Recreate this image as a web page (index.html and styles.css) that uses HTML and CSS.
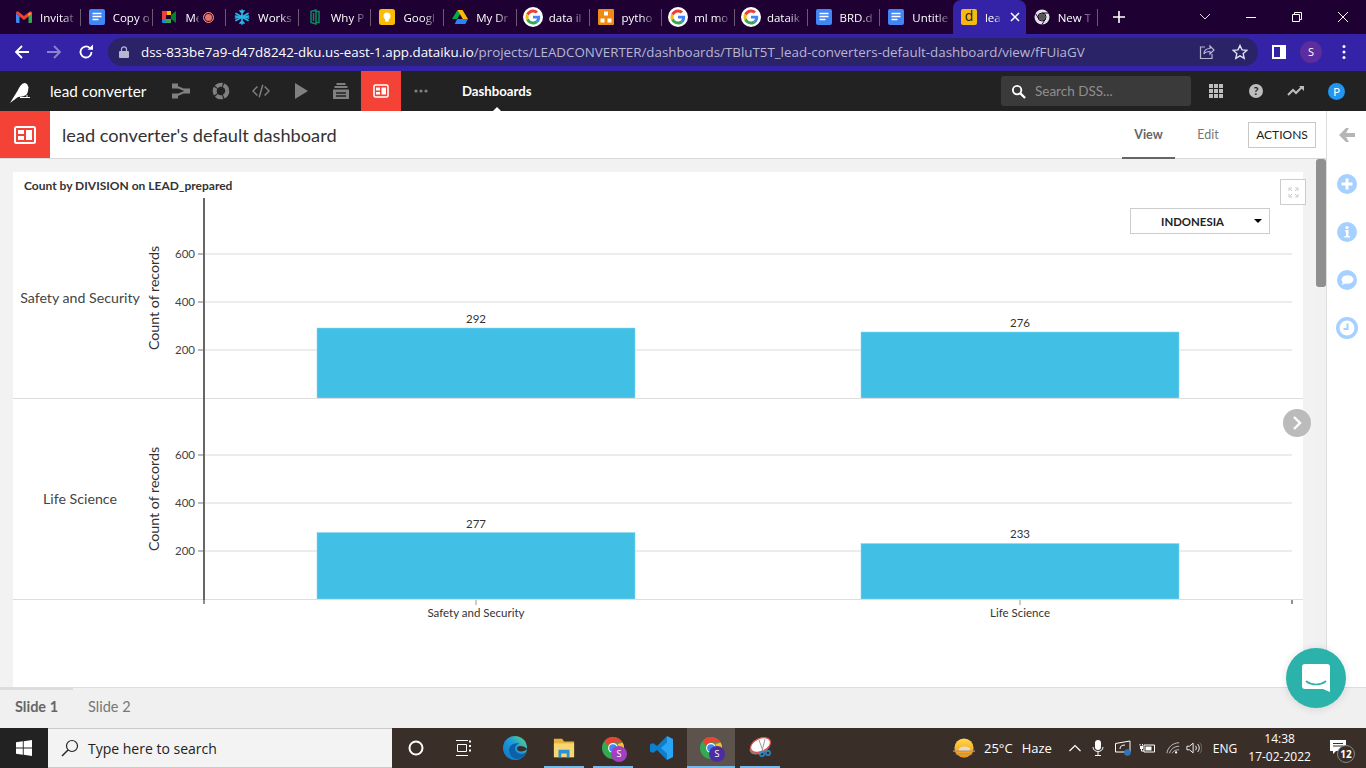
FILE: index.html
```html
<!DOCTYPE html>
<html lang="en">
<head>
    <meta charset="UTF-8">
    <title>lead converter's default dashboard</title>
    <link rel="stylesheet" href="styles.css">
</head>
<body>
    <svg class="defs" width="0" height="0">
        <symbol id="i-doc" viewBox="0 0 16 16"><rect width="16" height="16" rx="2" fill="#4285f4"/><path d="M3.5 4.5h9M3.5 7.5h9M3.5 10.5h6" stroke="#fff" stroke-width="1.5"/></symbol>
        <symbol id="i-g" viewBox="-8 -8 64 64"><circle cx="24" cy="24" r="32" fill="#fff"/><path fill="#EA4335" d="M24 9.5c3.54 0 6.71 1.22 9.21 3.6l6.85-6.85C35.9 2.38 30.47 0 24 0 14.62 0 6.51 5.38 2.56 13.22l7.98 6.19C12.43 13.72 17.74 9.5 24 9.5z"/><path fill="#4285F4" d="M46.98 24.55c0-1.57-.15-3.09-.38-4.55H24v9.02h12.94c-.58 2.96-2.26 5.48-4.78 7.18l7.73 6c4.51-4.18 7.09-10.36 7.09-17.65z"/><path fill="#FBBC05" d="M10.53 28.59c-.48-1.45-.76-2.99-.76-4.59s.27-3.14.76-4.59l-7.98-6.19C.92 16.46 0 20.12 0 24c0 3.88.92 7.54 2.56 10.78l7.97-6.19z"/><path fill="#34A853" d="M24 48c6.48 0 11.93-2.13 15.89-5.81l-7.73-6c-2.15 1.45-4.92 2.3-8.16 2.3-6.26 0-11.57-4.22-13.47-9.91l-7.98 6.19C6.51 42.62 14.62 48 24 48z"/></symbol>
        <symbol id="i-chrome" viewBox="0 0 24 24"><circle cx="12" cy="12" r="12" fill="#34a853"/><path d="M12 0a12 12 0 0 1 10.4 6H12a6 6 0 0 0-5.6 3.8L2.6 4.6A12 12 0 0 1 12 0z" fill="#ea4335"/><path d="M22.4 6A12 12 0 0 1 12 24l4.8-8.6A6 6 0 0 0 17 8z" fill="#fbc02d"/><circle cx="12" cy="12" r="5.4" fill="#fff"/><circle cx="12" cy="12" r="4.2" fill="#4285f4"/></symbol>
    </svg>

    <div class="tab-strip">
        <div class="tab">
            <svg class="fav" viewBox="0 0 16 12"><path d="M0 2v9a1 1 0 0 0 1 1h2.5V5.5z" fill="#4285f4"/><path d="M16 2v9a1 1 0 0 1-1 1h-2.5V5.5z" fill="#34a853"/><path d="M0 2a1.6 1.6 0 0 1 2.6-1.3L8 5 13.400.7A1.600 1.600 0 0 1 16 2l-3.500 3.500L8 9 3.500 5.500z" fill="#ea4335"/><path d="M12.500 2.300L16 2l-3.500 3.500z" fill="#fbbc04"/></svg>
            <span class="tab-name">Invitat</span>
        </div>
        <div class="tab"><svg class="fav"><use href="#i-doc"/></svg><span class="tab-name">Copy o</span></div>
        <div class="tab">
            <svg class="fav" viewBox="0 0 16 16"><path d="M1 2h9v4H5v4H1z" fill="#ea4335"/><path d="M1 10h4v4H2a1 1 0 0 1-1-1z" fill="#1e88e5"/><path d="M5 10h5v4H5z" fill="#34a853"/><path d="M6 2h4v4H6z" fill="#fbbc04"/><path d="M10 6l5-4v12l-5-4z" fill="#00832d"/><rect x="5" y="6" width="5" height="4" fill="#1e0033"/></svg>
            <span class="tab-name short">Me</span>
            <span class="rec"></span>
        </div>
        <div class="tab">
            <svg class="fav" viewBox="0 0 16 16" fill="none" stroke="#29b5e8" stroke-width="1.700" stroke-linecap="round"><path d="M8 1v14M2 4.500l12 7M14 4.500l-12 7M6 1.800L8 4l2-2.200M6 14.200L8 12l2 2.200M1.500 7l3 1-3 1M14.500 7l-3 1 3 1"/></svg>
            <span class="tab-name">Works</span>
        </div>
        <div class="tab">
            <svg class="fav" viewBox="0 0 16 16" fill="none" stroke="#0b8a5f" stroke-width="1.500"><path d="M4 2.500l5-1.500v14l-5-1.500zM9 2.500h3v11H9M6.500 4v8"/></svg>
            <span class="tab-name">Why P</span>
        </div>
        <div class="tab">
            <svg class="fav" viewBox="0 0 16 16"><rect width="16" height="16" rx="2.500" fill="#fbbc04"/><circle cx="8" cy="7" r="3.500" fill="#fff"/><rect x="6.300" y="10" width="3.400" height="2.600" fill="#fff"/></svg>
            <span class="tab-name">Googl</span>
        </div>
        <div class="tab">
            <svg class="fav" viewBox="0 0 16 14"><path d="M5.500 0h5L5.200 9H0z" fill="#00ac47"/><path d="M5.500 0h5L16 9h-5.200z" fill="#ffba00"/><path d="M2.700 14L5.200 9H16l-2.700 5z" fill="#2684fc"/></svg>
            <span class="tab-name">My Dr</span>
        </div>
        <div class="tab"><svg class="fav g"><use href="#i-g"/></svg><span class="tab-name">data il</span></div>
        <div class="tab">
            <svg class="fav" viewBox="0 0 16 16"><rect width="16" height="16" rx="1" fill="#f08a12"/><path d="M6 2.500h4v4H6zM2.500 9.500h4v4h-4zM9.500 9.500h4v4h-4z" fill="#fff"/></svg>
            <span class="tab-name">pytho</span>
        </div>
        <div class="tab"><svg class="fav g"><use href="#i-g"/></svg><span class="tab-name">ml mo</span></div>
        <div class="tab"><svg class="fav g"><use href="#i-g"/></svg><span class="tab-name">dataik</span></div>
        <div class="tab"><svg class="fav"><use href="#i-doc"/></svg><span class="tab-name">BRD.d</span></div>
        <div class="tab tab-last"><svg class="fav"><use href="#i-doc"/></svg><span class="tab-name">Untitle</span></div>
        <div class="tab tab-active">
            <span class="fav-d">d</span>
            <span class="tab-name tiny">lea</span>
            <svg class="tab-x" viewBox="0 0 10 10"><path d="M1 1l8 8M9 1l-8 8" stroke="#fff" stroke-width="1.500"/></svg>
        </div>
        <div class="tab">
            <svg class="fav" viewBox="0 0 16 16"><circle cx="8" cy="8" r="7.500" fill="#e3e3e3"/><circle cx="8" cy="8" r="3.200" fill="#555"/><circle cx="8" cy="8" r="4" fill="none" stroke="#1e0033" stroke-width="1"/><path d="M8 4H15M5 10L1.500 4.500M11.400 10L8 15.500" stroke="#1e0033"/></svg>
            <span class="tab-name">New T</span>
        </div>
        <svg class="new-tab" viewBox="0 0 12 12"><path d="M6 0v12M0 6h12" stroke="#fff" stroke-width="1.600"/></svg>
        <div class="win-ctrls">
            <svg viewBox="0 0 46 14"><path d="M18 4l5 5 5-5" fill="none" stroke="#ddd"/></svg>
            <svg viewBox="0 0 46 14"><path d="M18 7.500h10" stroke="#fff"/></svg>
            <svg viewBox="0 0 46 14"><path d="M18.500 4.500h7v7h-7zM20.500 4.500v-2h7v7h-2" fill="none" stroke="#fff"/></svg>
            <svg viewBox="0 0 46 14"><path d="M18 2l10 10M28 2L18 12" stroke="#fff"/></svg>
        </div>
    </div>

    <div class="toolbar">
        <svg class="tb-btn" viewBox="0 0 16 16"><path d="M15 8H2M8 2L2 8l6 6" fill="none" stroke="#fff" stroke-width="1.800"/></svg>
        <svg class="tb-btn" viewBox="0 0 16 16"><path d="M1 8h13M8 2l6 6-6 6" fill="none" stroke="#8d84d0" stroke-width="1.800"/></svg>
        <svg class="tb-btn" viewBox="0 0 16 16"><path d="M13.500 8A5.500 5.500 0 1 1 11.800 4" fill="none" stroke="#fff" stroke-width="1.800"/><path d="M9.500 5.800H15V.5z" fill="#fff"/></svg>
        <div class="omnibox">
            <svg class="lock" viewBox="0 0 10 12"><path d="M2.500 5V3.300a2.500 2.500 0 0 1 5 0V5" fill="none" stroke="#b9b6d2" stroke-width="1.200"/><rect y="5" width="10" height="7" rx="1" fill="#b9b6d2"/></svg>
            <span class="url"><span class="url-host">dss-833be7a9-d47d8242-dku.us-east-1.app.dataiku.io</span>/projects/LEADCONVERTER/dashboards/TBluT5T_lead-converters-default-dashboard/view/fFUiaGV</span>
            <svg class="omni-icon" viewBox="0 0 16 16" fill="none" stroke="#b9b6d2" stroke-width="1.200"><path d="M6 3H1.500v11.500H13V10M5 10c0-4 3-5.500 6-5.500V2l4 4-4 4V7.500c-3 0-5 .5-6 2.500z"/></svg>
            <svg class="omni-icon star" viewBox="0 0 16 16"><path d="M8 1.500l2 4.400 4.800.5-3.600 3.200 1 4.700L8 11.900l-4.200 2.400 1-4.700L1.200 6.400 6 5.900z" fill="none" stroke="#e4e2f2" stroke-width="1.400"/></svg>
        </div>
        <svg class="panel" viewBox="0 0 14 14"><path d="M0 0h14v14H0z" fill="#fff"/><path d="M2 2h6v10H2z" fill="#3423a6"/></svg>
        <span class="profile">S</span>
        <svg class="kebab" viewBox="0 0 4 16"><circle cx="2" cy="2.500" r="1.500" fill="#fff"/><circle cx="2" cy="8" r="1.500" fill="#fff"/><circle cx="2" cy="13.500" r="1.500" fill="#fff"/></svg>
    </div>

    <nav class="app-nav">
        <svg class="bird" viewBox="0 0 24 24"><path d="M1 24L9 11C11 7 13 4 16 4L18 5L19.500 8L19 12C18.500 15 17 17 13 17.500L9 18Z" fill="#fff"/><path d="M11 18.500H21M18 16V18" stroke="#fff"/></svg>
        <span class="project-name">lead converter</span>
        <div class="nav-icons">
            <svg viewBox="0 0 18 18"><path d="M3 4L15 9L3 14" fill="none" stroke="#808080" stroke-width="2"/><rect x="0" y="1.500" width="6" height="5" fill="#808080"/><rect x="0" y="11.500" width="6" height="5" fill="#808080"/><rect x="12" y="6.500" width="6" height="5" fill="#808080"/></svg>
            <svg viewBox="0 0 18 18"><circle cx="9" cy="9" r="6.300" fill="none" stroke="#808080" stroke-width="4" stroke-dasharray="6.800 1.100"/></svg>
            <svg viewBox="0 0 20 18"><path d="M6 4L1 9l5 5M14 4l5 5-5 5M12 2L8 16" fill="none" stroke="#808080" stroke-width="1.600"/></svg>
            <svg viewBox="0 0 18 18"><path d="M3 1l13 8-13 8z" fill="#808080"/></svg>
            <svg viewBox="0 0 18 18"><path d="M4.500 1h9v2h-9zM2.500 4h13v2h-13zM1 7.500h16V17H1z" fill="#808080"/><path d="M4 11h10M4 14h10" stroke="#222" stroke-width="1.500"/></svg>
        </div>
        <div class="nav-active">
            <svg viewBox="0 0 16 14"><rect x="1" y="1" width="14" height="12" rx="1.500" fill="none" stroke="#fff" stroke-width="1.600"/><path d="M3 3.500h4v3H3zM3 8h4v2.500H3zM8.500 3.500h4.500v7H8.500z" fill="#fff"/></svg>
        </div>
        <svg class="nav-more" viewBox="0 0 14 4"><circle cx="2" cy="2" r="1.600" fill="#808080"/><circle cx="7" cy="2" r="1.600" fill="#808080"/><circle cx="12" cy="2" r="1.600" fill="#808080"/></svg>
        <span class="nav-section">Dashboards</span>
        <div class="nav-right">
            <div class="search-box">
                <svg viewBox="0 0 16 16"><circle cx="6.500" cy="6.500" r="4.500" fill="none" stroke="#fff" stroke-width="2"/><path d="M10 10l5 5" stroke="#fff" stroke-width="2.400"/></svg>
                <span>Search DSS...</span>
            </div>
            <svg class="nav-tool" viewBox="0 0 14 14"><path d="M0 0h4v4H0zM5 0h4v4H5zM10 0h4v4h-4zM0 5h4v4H0zM5 5h4v4H5zM10 5h4v4h-4zM0 10h4v4H0zM5 10h4v4H5zM10 10h4v4h-4z" fill="#bdbdbd"/></svg>
            <span class="help">?</span>
            <svg class="nav-tool trend" viewBox="0 0 18 12"><path d="M1 10l5-5 3 3 6-6" fill="none" stroke="#bdbdbd" stroke-width="2"/><path d="M12 1h5v5z" fill="#bdbdbd"/></svg>
            <span class="user">P</span>
        </div>
    </nav>

    <header class="dash-header">
        <div class="dash-icon">
            <svg viewBox="0 0 22 18"><rect x="1" y="1" width="20" height="16" rx="1.500" fill="none" stroke="#fff" stroke-width="2"/><path d="M4 4h6v4H4zM4 10h6v4H4zM12 4h6v10h-6z" fill="#fff"/></svg>
        </div>
        <h1 class="dash-title">lead converter's default dashboard</h1>
        <a class="dash-tab dash-tab-on">View</a>
        <a class="dash-tab">Edit</a>
        <button class="actions">ACTIONS</button>
    </header>

    <div class="workspace">
        <main class="slide-area">
            <section class="card">
                <div class="card-title">Count by DIVISION on LEAD_prepared</div>
                <svg class="chart" width="1290" height="489" viewBox="13 198 1290 489">
                    <path class="grid" d="M204 254H1292M204 302H1292M204 350H1292M204 455H1292M204 503H1292M204 551H1292"/>
                    <path class="y-tick" d="M198 254H204M198 302H204M198 350H204M198 455H204M198 503H204M198 551H204"/>
                    <rect class="bar" x="317" y="328" width="318" height="70"/>
                    <rect class="bar" x="861" y="332" width="318" height="66"/>
                    <rect class="bar" x="317" y="532.500" width="318" height="66.500"/>
                    <rect class="bar" x="861" y="543.500" width="318" height="55.500"/>
                    <path class="sep" d="M13 398.500H1303M13 599.500H1303"/>
                    <path class="axis" d="M204 198V600"/>
                    <path class="tick-dark" d="M204 600V604M1292 600V604"/>
                    <path class="tick-light" d="M476 600V605M1020 600V605"/>

                    <text class="tick" x="195" y="258">600</text>
                    <text class="tick" x="195" y="306">400</text>
                    <text class="tick" x="195" y="354">200</text>
                    <text class="tick" x="195" y="459">600</text>
                    <text class="tick" x="195" y="507">400</text>
                    <text class="tick" x="195" y="555">200</text>

                    <text class="val" x="476" y="323">292</text>
                    <text class="val" x="1020" y="327">276</text>
                    <text class="val" x="476" y="528">277</text>
                    <text class="val" x="1020" y="538">233</text>

                    <text class="val" x="476" y="617">Safety and Security</text>
                    <text class="val" x="1020" y="617">Life Science</text>

                    <text class="facet" x="80" y="303">Safety and Security</text>
                    <text class="facet" x="80" y="504">Life Science</text>
                    <text class="y-title" transform="translate(159 298) rotate(-90)">Count of records</text>
                    <text class="y-title" transform="translate(159 499) rotate(-90)">Count of records</text>
                </svg>
                <button class="expand">
                    <svg viewBox="0 0 11 11"><path d="M1 4V1h3M7 1h3v3M10 7v3H7M4 10H1V7M1 1l3 3M10 1L7 4M10 10L7 7M1 10l3-3" fill="none" stroke="#ccc"/></svg>
                </button>
                <div class="filter"><span>INDONESIA</span><i class="caret"></i></div>
            </section>
            <button class="next-slide">
                <svg viewBox="0 0 10 14"><path d="M2 1l6 6-6 6" fill="none" stroke="#fff" stroke-width="2.400"/></svg>
            </button>
        </main>
        <div class="scrollbar"><div class="scroll-thumb"></div></div>
        <aside class="side-rail">
            <svg class="rail-back" viewBox="0 0 16 14"><path d="M0 7L7 0H10L7 5H16V9H7L10 14H7Z" fill="#b5b5b5"/></svg>
            <svg class="rail-btn" viewBox="0 0 20 20"><circle cx="10" cy="10" r="10" fill="#a6d0ff"/><path d="M10 4.500v11M4.500 10h11" stroke="#fff" stroke-width="3"/></svg>
            <svg class="rail-btn" viewBox="0 0 20 20"><circle cx="10" cy="10" r="10" fill="#a6d0ff"/><path d="M8 8h3.500v6H13v1.500H7.500V14H9V9.500H8z" fill="#fff"/><circle cx="10" cy="5.500" r="1.600" fill="#fff"/></svg>
            <svg class="rail-btn" viewBox="0 0 20 20"><circle cx="10" cy="10" r="10" fill="#a6d0ff"/><ellipse cx="10.500" cy="9.500" rx="6" ry="4.300" fill="#fff"/><path d="M6 12l-1.500 3 4-1.500z" fill="#fff"/></svg>
            <svg class="rail-btn rail-clock" viewBox="0 0 22 22"><circle cx="11" cy="11" r="11" fill="#a6d0ff"/><circle cx="11" cy="11" r="7.500" fill="#fff"/><path d="M11.500 6.500V12H7.500" fill="none" stroke="#a6d0ff" stroke-width="2"/></svg>
        </aside>
        <button class="chat">
            <svg viewBox="0 0 28 28"><path d="M3 0h22a3 3 0 0 1 3 3v25l-7-3H3a3 3 0 0 1-3-3V3a3 3 0 0 1 3-3z" fill="#fff"/><path d="M4.500 17.500c5.500 4 13.500 4 19 0" fill="none" stroke="#2bb3ab" stroke-width="1.700" stroke-linecap="round"/></svg>
        </button>
    </div>

    <div class="slide-bar">
        <span class="slide-tab slide-tab-on">Slide 1</span>
        <span class="slide-tab">Slide 2</span>
    </div>

    <footer class="taskbar">
        <div class="start">
            <svg viewBox="0 0 16 16"><path d="M0 2.300L6.800 1.300V7.500H0zM7.700 1.200L16 0V7.500H7.700zM0 8.400H6.800V14.700L0 13.700zM7.700 8.400H16V16L7.700 14.800z" fill="#fff"/></svg>
        </div>
        <div class="task-search">
            <svg viewBox="0 0 18 18"><circle cx="11" cy="7" r="5.500" fill="none" stroke="#222" stroke-width="1.200"/><path d="M7 11l-6 6" stroke="#222" stroke-width="1.400"/></svg>
            <span>Type here to search</span>
        </div>
        <div class="task-apps">
            <div class="app app-cortana"><svg viewBox="0 0 16 16" class="sm"><circle cx="8" cy="8" r="6.500" fill="none" stroke="#fff" stroke-width="2"/></svg></div>
            <div class="app app-view"><svg viewBox="0 0 16 16" class="sm"><path d="M1 .5h12M1 15.500h12M2.500 4.500h9v7h-9z" fill="none" stroke="#fff"/><path d="M14 .5h2v2h-2zM14 5h2v2h-2zM14 9.500h2v2h-2z" fill="#fff"/></svg></div>
            <div class="app app-edge">
                <svg viewBox="0 0 24 24"><defs><linearGradient id="edge" x1="0" y1="1" x2="1" y2="0"><stop offset="0" stop-color="#1273c4"/><stop offset=".55" stop-color="#1c9bdc"/><stop offset="1" stop-color="#5fdc7c"/></linearGradient></defs><circle cx="12" cy="12" r="12" fill="url(#edge)"/><path d="M6 14c0 5 4 9 8 9 4 0 8-3 9-7-2 2-5 2.500-7 1.500-3-1-4-3-4-5 0-3 3-5 5-5-5-1-11 1-11 6.500z" fill="#0c5fa8"/><path d="M24 13c-1 1.500-3.500 2.500-6 2.500-2.500 0-4-1.500-4-3 0-1.500 1-2.500 3-2.500 3 0 5.500 1 7 3z" fill="#3a2f28"/></svg>
            </div>
            <div class="app app-open">
                <svg class="md" viewBox="0 0 24 24"><path d="M1 2h9l2 3h11v17H1z" fill="#e8b33a"/><path d="M1 7h22v15H1z" fill="#f7d774"/><path d="M6 22v-8h12v8h-3v-4H9v4z" fill="#2b90d9"/></svg>
            </div>
            <div class="app app-open">
                <svg class="md" viewBox="0 0 24 24"><use href="#i-chrome"/></svg><span class="badge">S</span>
            </div>
            <div class="app">
                <svg viewBox="0 0 24 24"><path d="M17 0v24L7 14l-4 3-3-1.500V8.500L3 7l4 3z" fill="#0b80cf"/><path d="M17 0l6 3v18l-6 3V17.500L11 12l6-5.500z" fill="#2aa5f5"/></svg>
            </div>
            <div class="app app-open app-on">
                <svg class="md" viewBox="0 0 24 24"><use href="#i-chrome"/></svg><span class="badge badge-dark">S</span>
            </div>
            <div class="app app-open">
                <svg viewBox="0 0 24 24"><ellipse cx="12" cy="11" rx="11" ry="6.500" fill="#8a7f78" transform="rotate(-25 12 11)"/><ellipse cx="12.500" cy="9" rx="10.500" ry="6.500" fill="#fff" stroke="#d9534f" stroke-width="1.200" transform="rotate(-25 12.500 9)"/><path d="M11 4l4 11M17 3l-3 12" stroke="#9a9a9a"/><circle cx="14" cy="18" r="2.200" fill="none" stroke="#2b90d9" stroke-width="1.400"/><circle cx="20" cy="17" r="2.200" fill="none" stroke="#2b90d9" stroke-width="1.400"/></svg>
            </div>
        </div>
        <div class="tray">
            <svg class="weather" viewBox="0 0 24 24"><defs><linearGradient id="sun" x1="0" y1="0" x2="0" y2="1"><stop offset="0" stop-color="#ffd84d"/><stop offset="1" stop-color="#f2920c"/></linearGradient></defs><circle cx="12" cy="12" r="10.500" fill="url(#sun)"/><path d="M6 14c1-4 10-5 13-1l-1 2H7z" fill="#e6dccd"/><path d="M0 15.500h24M3 18.500h18" stroke="#a89884" stroke-width="1.400"/></svg>
            <span class="temp">25°C</span>
            <span class="haze">Haze</span>
            <svg class="tray-i caret-up" viewBox="0 0 12 8"><path d="M.5 7L6 1.500 11.500 7" fill="none" stroke="#fff" stroke-width="1.200"/></svg>
            <svg class="tray-i tray-mic" viewBox="0 0 12 16"><rect x="3" y="0" width="6" height="10" rx="3" fill="#fff"/><path d="M1 7c0 6 10 6 10 0M6 12v3M3 15.500h6" fill="none" stroke="#fff"/></svg>
            <svg class="tray-i tray-mon" viewBox="0 0 16 16"><path d="M.5 3.500L15 1v11H.5z" fill="none" stroke="#fff"/><path d="M5 9c0-3 2-4 5-4" fill="none" stroke="#fff"/><circle cx="12.500" cy="12.500" r="3.300" fill="#2f74c0"/></svg>
            <svg class="tray-i tray-bat" viewBox="0 0 16 12"><path d="M5 3h10.500v7H5z" fill="none" stroke="#fff"/><path d="M6.500 4.500h6v4h-6zM1 4h3v3H1zM.5 2h1v1.500h-1zM3 2h1v1.500H3z" fill="#fff"/><path d="M2.500 7v2H5" fill="none" stroke="#fff"/></svg>
            <svg class="tray-i tray-wifi" viewBox="0 0 16 14" fill="none" stroke="#cfcfcf"><path d="M1 13C2 6 8 1 15 1M4 13c1-4 5-8 11-8M7 13c1-2 3-4 8-4"/><circle cx="11.500" cy="12" r="1.300" fill="#fff" stroke="none"/></svg>
            <svg class="tray-i tray-vol" viewBox="0 0 18 14"><path d="M1 5h3l4-3.500v11L4 9H1z" fill="none" stroke="#fff"/><path d="M10.500 4.500c1.500 1.500 1.500 3.500 0 5M13 2.500c2.500 2.500 2.500 6.500 0 9" fill="none" stroke="#fff"/><path d="M15.500 1c3 3 3 9 0 12" fill="none" stroke="#777"/></svg>
            <span class="lang">ENG</span>
            <div class="clock"><span>14:38</span><span>17-02-2022</span></div>
            <div class="notif">
                <svg viewBox="0 0 18 16"><path d="M0 0h16v11H6l-3 3v-3H0z" fill="#fff"/><path d="M3 3.500h10M3 6h10" stroke="#3a3028"/></svg>
                <span class="notif-count">12</span>
            </div>
        </div>
    </footer>
</body>
</html>
```
FILE: styles.css
```css
* {
    box-sizing: border-box;
}
html, body {
    height: 100%;
}
body {
    margin: 0;
    display: flex;
    flex-direction: column;
    width: 1366px;
    height: 768px;
    overflow: hidden;
    font-family: "Lato", sans-serif;
    background-color: #f2f2f2;
    color: #333;
}
svg {
    display: block;
    flex: none;
}
.defs {
    position: absolute;
}

/* browser tabs */
.tab-strip {
    display: flex;
    align-items: center;
    height: 34px;
    padding-left: 8px;
    background-color: #1e0033;
    font-family: "Open Sans", sans-serif;
    color: #fff;
}
.tab {
    position: relative;
    display: flex;
    align-items: center;
    flex: none;
    width: 72.7px;
    height: 34px;
    padding: 0 8px;
}
.tab::after {
    content: "";
    position: absolute;
    top: 9px;
    right: 0;
    width: 1px;
    height: 17px;
    background-color: #6a5c72;
}
.tab-last::after,
.tab-active::after {
    display: none;
}
.tab-active {
    background-color: #3423a6;
    border-radius: 8px 8px 0 0;
}
.fav {
    width: 16px;
    height: 16px;
    margin-right: 8px;
}
.fav.g {
    width: 20px;
    height: 20px;
    margin: 0 6px 0 -2px;
}
.fav-d {
    display: block;
    flex: none;
    width: 16px;
    height: 16px;
    margin-right: 8px;
    border-radius: 2px;
    background-color: #f7b90f;
    color: #222;
    font-size: 14px;
    line-height: 14px;
    text-align: center;
}
.tab-name {
    flex: none;
    white-space: nowrap;
    font-size: 11.5px;
    -webkit-mask-image: linear-gradient(to right, #000 65%, rgba(0, 0, 0, 0.25));
    mask-image: linear-gradient(to right, #000 65%, rgba(0, 0, 0, 0.25));
}
.tab-name.short {
    width: 14px;
}
.tab-name.tiny {
    width: 15px;
}
.rec {
    flex: none;
    width: 11px;
    height: 11px;
    margin-left: 4px;
    border-radius: 50%;
    border: 1px solid #f28b82;
    background-color: #e57368;
    box-shadow: inset 0 0 0 1px #1e0033;
}
.tab-x {
    width: 10px;
    height: 10px;
    margin-left: 10px;
}
.new-tab {
    width: 12px;
    height: 12px;
    margin-left: 15px;
}
.win-ctrls {
    display: flex;
    margin-left: auto;
}
.win-ctrls svg {
    width: 46px;
    height: 14px;
}

/* address bar */
.toolbar {
    display: flex;
    align-items: center;
    height: 37px;
    padding: 0 0 1px 14px;
    background-color: #3423a6;
    font-family: "Open Sans", sans-serif;
}
.tb-btn {
    width: 16px;
    height: 16px;
    margin-right: 16px;
}
.omnibox {
    display: flex;
    align-items: center;
    width: 1150px;
    height: 28px;
    margin-left: -2px;
    padding-left: 11px;
    border-radius: 14px;
    background-color: #2a2367;
}
.lock {
    width: 10px;
    height: 12px;
    margin-right: 12px;
}
.url {
    flex: 1;
    white-space: nowrap;
    font-size: 13.35px;
    color: #b9b6d2;
}
.url-host {
    color: #fff;
}
.omni-icon {
    width: 16px;
    height: 16px;
    margin-right: 17px;
}
.omni-icon.star {
    margin-right: 10px;
}
.panel {
    width: 14px;
    height: 14px;
    margin-left: 14px;
}
.profile {
    width: 22px;
    height: 22px;
    margin-left: 14px;
    border-radius: 50%;
    background-color: #5b2d9e;
    color: #fff;
    font-size: 11px;
    line-height: 22px;
    text-align: center;
}
.kebab {
    width: 4px;
    height: 16px;
    margin-left: 20px;
}

/* dss nav */
.app-nav {
    display: flex;
    align-items: center;
    height: 40px;
    background-color: #222;
    color: #fff;
}
.bird {
    width: 24px;
    height: 24px;
    margin-left: 9px;
}
.project-name {
    width: 122px;
    margin-left: 17px;
    font-size: 15.3px;
}
.nav-icons {
    display: flex;
    align-items: center;
}
.nav-icons svg {
    width: 18px;
    height: 18px;
    margin-right: 22px;
}
.nav-active {
    display: flex;
    align-items: center;
    justify-content: center;
    width: 40px;
    height: 40px;
    margin-left: -11px;
    background-color: #f44336;
}
.nav-active svg {
    width: 16px;
    height: 14px;
}
.nav-more {
    width: 14px;
    height: 4px;
    margin-left: 13px;
}
.nav-section {
    position: relative;
    margin-left: 34px;
    font-size: 13.2px;
    line-height: 40px;
    font-weight: 700;
}
.nav-section::after {
    content: "";
    position: absolute;
    left: 50%;
    bottom: 0;
    margin-left: -4px;
    border: 4px solid transparent;
    border-top: 0;
    border-bottom-color: #fff;
}
.nav-right {
    display: flex;
    align-items: center;
    margin-left: auto;
}
.search-box {
    display: flex;
    align-items: center;
    width: 190px;
    height: 30px;
    padding-left: 10px;
    border-radius: 3px;
    background-color: #3a3a3a;
    color: #8f8f8f;
    font-size: 13.5px;
}
.search-box svg {
    width: 15px;
    height: 15px;
    margin-right: 9px;
}
.nav-tool {
    width: 14px;
    height: 14px;
    margin-left: 18px;
}
.nav-tool.trend {
    width: 18px;
    height: 12px;
    margin-left: 24px;
}
.help {
    width: 14px;
    height: 14px;
    margin-left: 26px;
    border-radius: 50%;
    background-color: #bdbdbd;
    color: #222;
    font-size: 11px;
    font-weight: 700;
    line-height: 14px;
    text-align: center;
}
.user {
    width: 17px;
    height: 17px;
    margin: 0 21px 0 23px;
    border-radius: 50%;
    background-color: #2196f3;
    font-size: 11px;
    line-height: 17px;
    text-align: center;
}

/* dashboard header */
.dash-header {
    display: flex;
    align-items: center;
    flex: none;
    height: 48px;
    border-bottom: 1px solid #d9d9d9;
    background-color: #fff;
}
.dash-icon {
    display: flex;
    align-items: center;
    justify-content: center;
    align-self: stretch;
    width: 50px;
    background-color: #f44336;
}
.dash-icon svg {
    width: 22px;
    height: 18px;
}
.dash-title {
    flex: 1;
    margin: 0 0 0 12px;
    font-size: 18.2px;
    font-weight: 400;
    color: #333;
}
.dash-tab {
    display: flex;
    align-items: center;
    justify-content: center;
    align-self: stretch;
    width: 53px;
    margin-right: 10px;
    font-size: 12.5px;
    color: #777;
}
.dash-tab-on {
    border-bottom: 2px solid #666;
    margin-bottom: -1px;
    font-weight: 700;
    color: #666;
}
.dash-tab + .dash-tab {
    width: 46px;
    margin-right: 17px;
}
.actions {
    width: 68px;
    height: 26px;
    margin-right: 50px;
    padding: 0;
    border: 1px solid #c8c8c8;
    background-color: #fff;
    color: #222;
    font-family: inherit;
    font-size: 12px;
}

/* content */
.workspace {
    position: relative;
    display: flex;
    flex: 1;
    min-height: 0;
}
.slide-area {
    position: relative;
    flex: 1;
    padding: 13px 13px 0 13px;
}
.card {
    position: relative;
    height: 100%;
    background-color: #fff;
}
.card-title {
    height: 26px;
    padding-left: 11px;
    font-size: 12px;
    font-weight: 700;
    line-height: 27px;
    color: #333;
}
.grid {
    stroke: #ececec;
    stroke-width: 2;
}
.y-tick {
    stroke: #bbb;
    stroke-width: 2;
}
.bar {
    fill: #3bbde3;
    fill-opacity: 0.97;
    stroke: #8ed8ee;
    stroke-width: 0.5;
}
.sep {
    stroke: #ddd;
    stroke-width: 1;
}
.axis {
    stroke: #666;
    stroke-width: 2;
}
.tick-dark {
    stroke: #222;
}
.tick-light {
    stroke: #ccc;
    stroke-width: 2;
}
.tick {
    font-size: 11.5px;
    text-anchor: end;
    fill: #444;
}
.val {
    font-size: 11.5px;
    text-anchor: middle;
    fill: #333;
}
.facet {
    font-size: 14.2px;
    text-anchor: middle;
    fill: #444;
}
.y-title {
    font-size: 14.2px;
    text-anchor: middle;
    fill: #333;
}
.expand {
    position: absolute;
    top: 7px;
    right: -3px;
    display: flex;
    align-items: center;
    justify-content: center;
    width: 26px;
    height: 26px;
    padding: 0;
    border: 1px solid #ccc;
    background-color: #fff;
}
.expand svg {
    width: 11px;
    height: 11px;
}
.filter {
    position: absolute;
    top: 36px;
    left: 1117px;
    display: flex;
    align-items: center;
    width: 140px;
    height: 26px;
    border: 1px solid #ccc;
    background-color: #fff;
    color: #222;
    font-size: 11.4px;
    font-weight: 700;
}
.filter span {
    flex: 1;
    text-align: center;
}
.caret {
    width: 0;
    height: 0;
    margin-right: 7px;
    border: 4px solid transparent;
    border-bottom: 0;
    border-top-color: #000;
}
.next-slide {
    position: absolute;
    top: 250px;
    right: 5px;
    display: flex;
    align-items: center;
    justify-content: center;
    width: 28px;
    height: 28px;
    padding: 0;
    border: none;
    border-radius: 50%;
    background-color: #bbb;
}
.next-slide svg {
    width: 10px;
    height: 14px;
}
.scrollbar {
    flex: none;
    width: 10px;
    background-color: #f1f1f1;
}
.scroll-thumb {
    height: 128px;
    border-radius: 3px;
    background-color: #8f8f8f;
}
.side-rail {
    position: relative;
    display: flex;
    flex-direction: column;
    align-items: center;
    flex: none;
    width: 40px;
    margin-top: -48px;
    padding-top: 17px;
    border-left: 1px solid #ddd;
    background-color: #fff;
}
.rail-back {
    width: 18px;
    height: 14px;
    margin-bottom: 32px;
}
.rail-btn {
    width: 20px;
    height: 20px;
    margin-bottom: 28px;
}
.rail-clock {
    width: 22px;
    height: 22px;
    margin-top: -1px;
}
.chat {
    position: absolute;
    top: 489px;
    right: 20px;
    display: flex;
    align-items: center;
    justify-content: center;
    width: 60px;
    height: 60px;
    padding: 0;
    border: none;
    border-radius: 50%;
    background-color: #2bb3ab;
    box-shadow: 0 1px 8px rgba(0, 0, 0, 0.12);
    z-index: 2;
}
.chat svg {
    width: 28px;
    height: 32px;
}

/* slides */
.slide-bar {
    display: flex;
    align-items: center;
    flex: none;
    height: 41px;
    padding-bottom: 4px;
    border-top: 1px solid #ddd;
    background-color: #f0f0f0;
}
.slide-tab {
    width: 73px;
    padding-left: 15px;
    font-size: 14.5px;
    color: #777;
}
.slide-tab-on {
    align-self: flex-start;
    margin-top: -1px;
    border-top: 3px solid #ddd;
    line-height: 34px;
    font-weight: 700;
    color: #666;
}

/* windows taskbar */
.taskbar {
    display: flex;
    flex: none;
    height: 40px;
    background-color: #3a2f28;
    color: #fff;
    font-family: "Open Sans", sans-serif;
}
.start {
    display: flex;
    align-items: center;
    justify-content: center;
    width: 48px;
    background-color: #222;
}
.start svg {
    width: 16px;
    height: 16px;
}
.task-search {
    display: flex;
    align-items: center;
    width: 344px;
    padding-left: 13px;
    border: 1px solid #ccc;
    border-width: 1px 0;
    background-color: #f3f3f3;
    color: #222;
    font-size: 14px;
}
.task-search svg {
    width: 18px;
    height: 18px;
    margin-right: 9px;
}
.task-apps {
    display: flex;
    gap: 1px;
}
.app {
    position: relative;
    display: flex;
    align-items: center;
    justify-content: center;
    width: 48px;
    height: 40px;
}
.app-cortana {
    width: 47px;
}
.app-view {
    width: 46px;
}
.app-edge {
    margin-left: 4px;
}
.app svg {
    width: 24px;
    height: 24px;
}
.app svg.md {
    width: 22px;
    height: 22px;
}
.app svg.sm {
    width: 16px;
    height: 16px;
}
.app-open::after {
    content: "";
    position: absolute;
    left: 4px;
    right: 4px;
    bottom: 0;
    height: 2px;
    background-color: #76b9ed;
}
.app-on {
    background-color: #5c534c;
}
.app-on::after {
    left: 0;
    right: 0;
}
.badge {
    position: absolute;
    right: 10px;
    bottom: 6px;
    width: 16px;
    height: 16px;
    border-radius: 50%;
    background-color: #a33fc0;
    font-size: 9px;
    line-height: 16px;
    text-align: center;
}
.badge-dark {
    background-color: #4b2fa0;
}
.tray {
    display: flex;
    align-items: center;
    flex: 1;
    margin-left: 169px;
    font-size: 13px;
}
.weather {
    width: 22px;
    height: 22px;
}
.temp {
    margin-left: 9px;
}
.haze {
    margin-left: 9px;
}
.tray-i {
    height: 16px;
    margin-left: 11px;
}
.tray-i.caret-up {
    width: 12px;
    height: 8px;
    margin-left: 17px;
}
.tray-mic {
    width: 12px;
}
.tray-mon {
    width: 16px;
}
.tray-i.tray-bat {
    width: 16px;
    margin-left: 8px;
}
.tray-wifi {
    width: 14px;
}
.tray-i.tray-vol {
    width: 16px;
    margin-left: 6px;
}
.lang {
    margin-left: 11px;
    font-size: 12px;
}
.clock {
    display: flex;
    flex-direction: column;
    align-items: center;
    margin-left: 11px;
    font-size: 12px;
    line-height: 18px;
}
.notif {
    position: relative;
    margin-left: 19px;
}
.notif svg {
    width: 18px;
    height: 16px;
}
.notif-count {
    position: absolute;
    top: 5px;
    left: 7px;
    width: 18px;
    height: 18px;
    border: 1px solid #888;
    border-radius: 50%;
    background-color: #3a2f28;
    font-size: 10px;
    font-weight: 700;
    line-height: 16px;
    text-align: center;
}
```
